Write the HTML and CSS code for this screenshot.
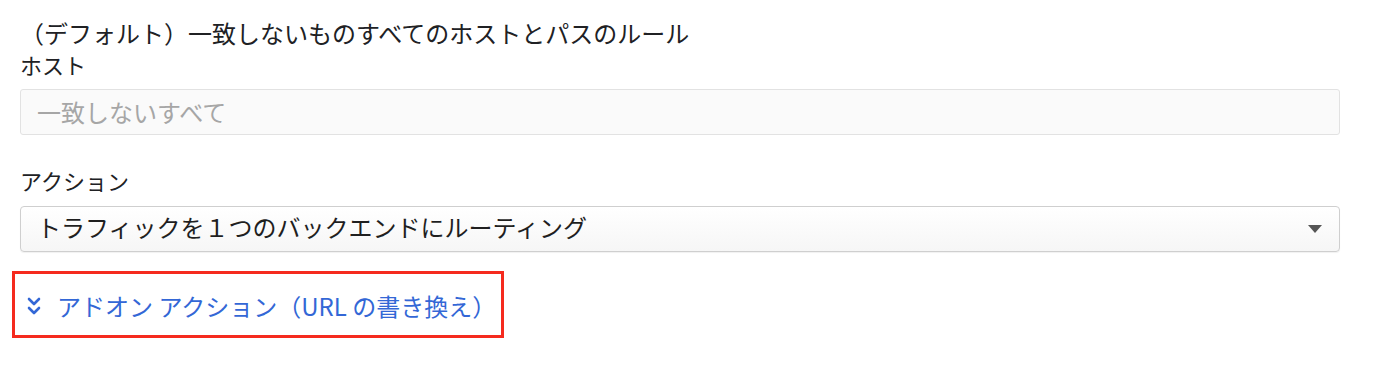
FILE: index.html
```html
<!DOCTYPE html>
<html lang="ja">
<head>
<meta charset="utf-8">
<link rel="stylesheet" href="styles.css">
</head>
<body>
<div class="form">
  <div class="title">（デフォルト）一致しないものすべてのホストとパスのルール</div>
  <div class="label">ホスト</div>
  <div class="input"><span class="placeholder">一致しないすべて</span></div>
  <div class="label label-action">アクション</div>
  <div class="select">
    <span class="select-text">トラフィックを１つのバックエンドにルーティング</span>
    <span class="caret"></span>
  </div>
  <div class="highlight">
    <div class="addon">
      <svg class="chev" width="14" height="18" viewBox="0 0 14 18">
        <path d="M2 2 L7 7 L12 2" fill="none" stroke="#3367d6" stroke-width="2.6" stroke-linecap="round" stroke-linejoin="round"/>
        <path d="M2 11 L7 16 L12 11" fill="none" stroke="#3367d6" stroke-width="2.6" stroke-linecap="round" stroke-linejoin="round"/>
      </svg>
      <span class="addon-text">アドオン アクション（URL の書き換え）</span>
    </div>
  </div>
</div>
</body>
</html>
```

FILE: styles.css
```css
html, body {
  margin: 0;
  padding: 0;
  background: #ffffff;
}
body {
  font-family: "Noto Sans CJK JP", "Noto Sans", sans-serif;
  color: #202124;
}
.form {
  padding: 17px 0 0 20px;
  width: 1320px;
  display: flex;
  flex-direction: column;
  align-items: stretch;
}
.title {
  font-size: 24px;
  line-height: 32px;
  height: 32px;
  white-space: nowrap;
}
.label {
  font-size: 22px;
  line-height: 30px;
  height: 30px;
}
.label-action {
  margin-top: 30px;
}
.input {
  margin-top: 10px;
  height: 46px;
  box-sizing: border-box;
  border: 1px solid #e2e2e2;
  border-radius: 3px;
  background: #fafafa;
  display: flex;
  align-items: center;
  padding-left: 16px;
}
.placeholder {
  font-size: 24px;
  color: #a6a6a6;
  margin-bottom: 2px;
}
.select {
  margin-top: 11px;
  height: 46px;
  box-sizing: border-box;
  border: 1px solid #cfcfcf;
  border-radius: 4px;
  background: linear-gradient(#ffffff, #f6f6f6);
  box-shadow: 0 1px 1px rgba(0,0,0,0.06);
  display: flex;
  align-items: center;
  justify-content: space-between;
  padding: 0 17px 0 16px;
}
.select-text {
  font-size: 24px;
  color: #1f1f1f;
  margin-bottom: 5px;
}
.caret {
  width: 0;
  height: 0;
  border-left: 7.5px solid transparent;
  border-right: 7.5px solid transparent;
  border-top: 8px solid #555555;
}
.highlight {
  margin-top: 19px;
  margin-left: -8px;
  width: 492px;
  height: 67px;
  box-sizing: border-box;
  border: 3px solid #f52a1e;
  display: flex;
  align-items: center;
  padding-left: 12px;
}
.addon {
  display: flex;
  align-items: center;
  gap: 16px;
  color: #3367d6;
  margin-top: 2px;
}
.chev {
  display: block;
}
.addon-text {
  font-size: 24px;
  line-height: 30px;
  white-space: nowrap;
}
```
